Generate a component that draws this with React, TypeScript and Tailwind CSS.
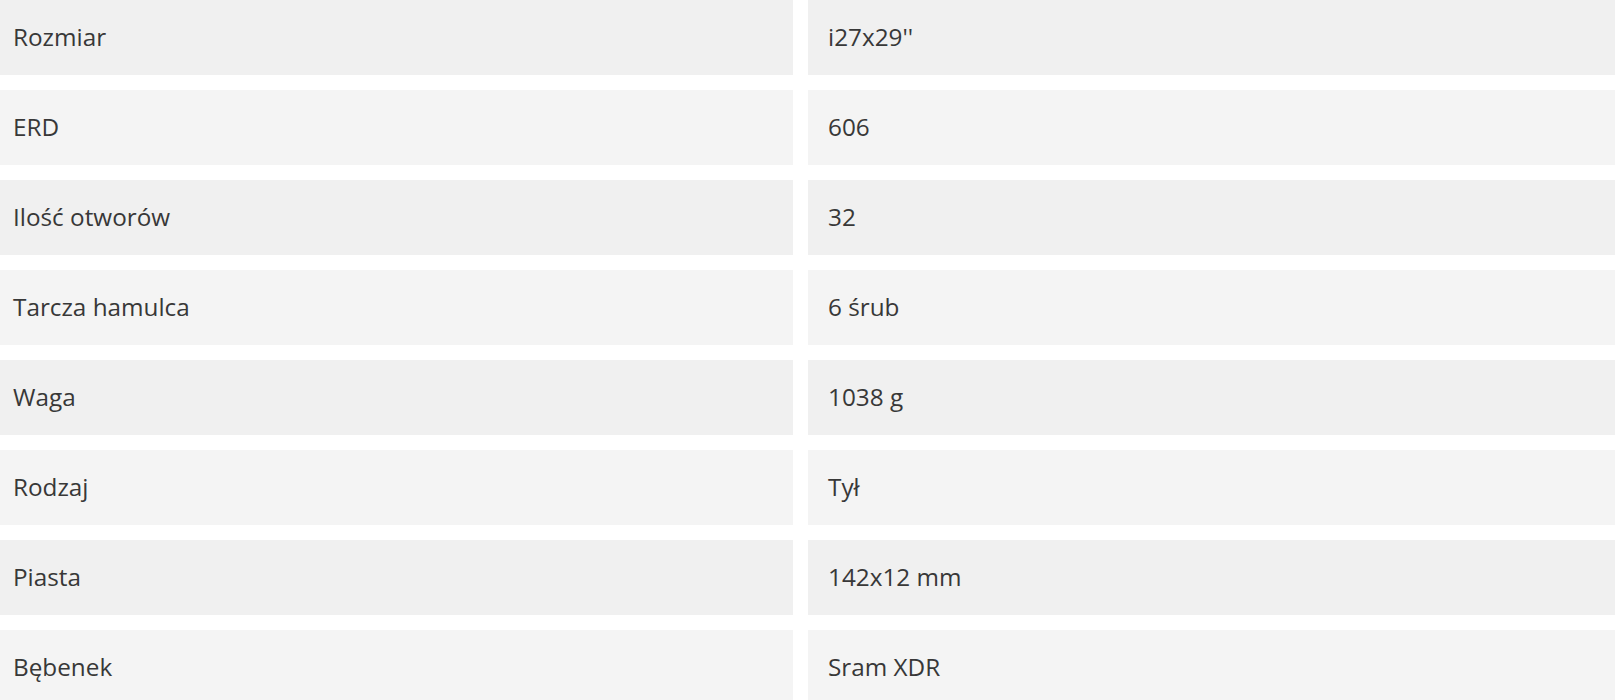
const specs: [string, string][] = [
  ["Rozmiar", "i27x29''"],
  ["ERD", "606"],
  ["Ilość otworów", "32"],
  ["Tarcza hamulca", "6 śrub"],
  ["Waga", "1038 g"],
  ["Rodzaj", "Tył"],
  ["Piasta", "142x12 mm"],
  ["Bębenek", "Sram XDR"],
];

export default function App() {
  return (
    <div className="h-[700px] w-[1615px] overflow-hidden bg-white font-['Open_Sans',sans-serif] text-[24.3px] text-[#383838]">
      <div className="flex flex-col gap-[15px]">
        {specs.map(([label, value], i) => (
          <div key={label} className="grid grid-cols-[793px_1fr] gap-[15px]">
            <div
              className={`flex h-[75px] items-center pl-[13px] ${
                i % 2 === 0 ? "bg-[#f0f0f0]" : "bg-[#f4f4f4]"
              }`}
            >
              {label}
            </div>
            <div
              className={`flex h-[75px] items-center pl-[20px] ${
                i % 2 === 0 ? "bg-[#f0f0f0]" : "bg-[#f4f4f4]"
              }`}
            >
              {value}
            </div>
          </div>
        ))}
      </div>
    </div>
  );
}
